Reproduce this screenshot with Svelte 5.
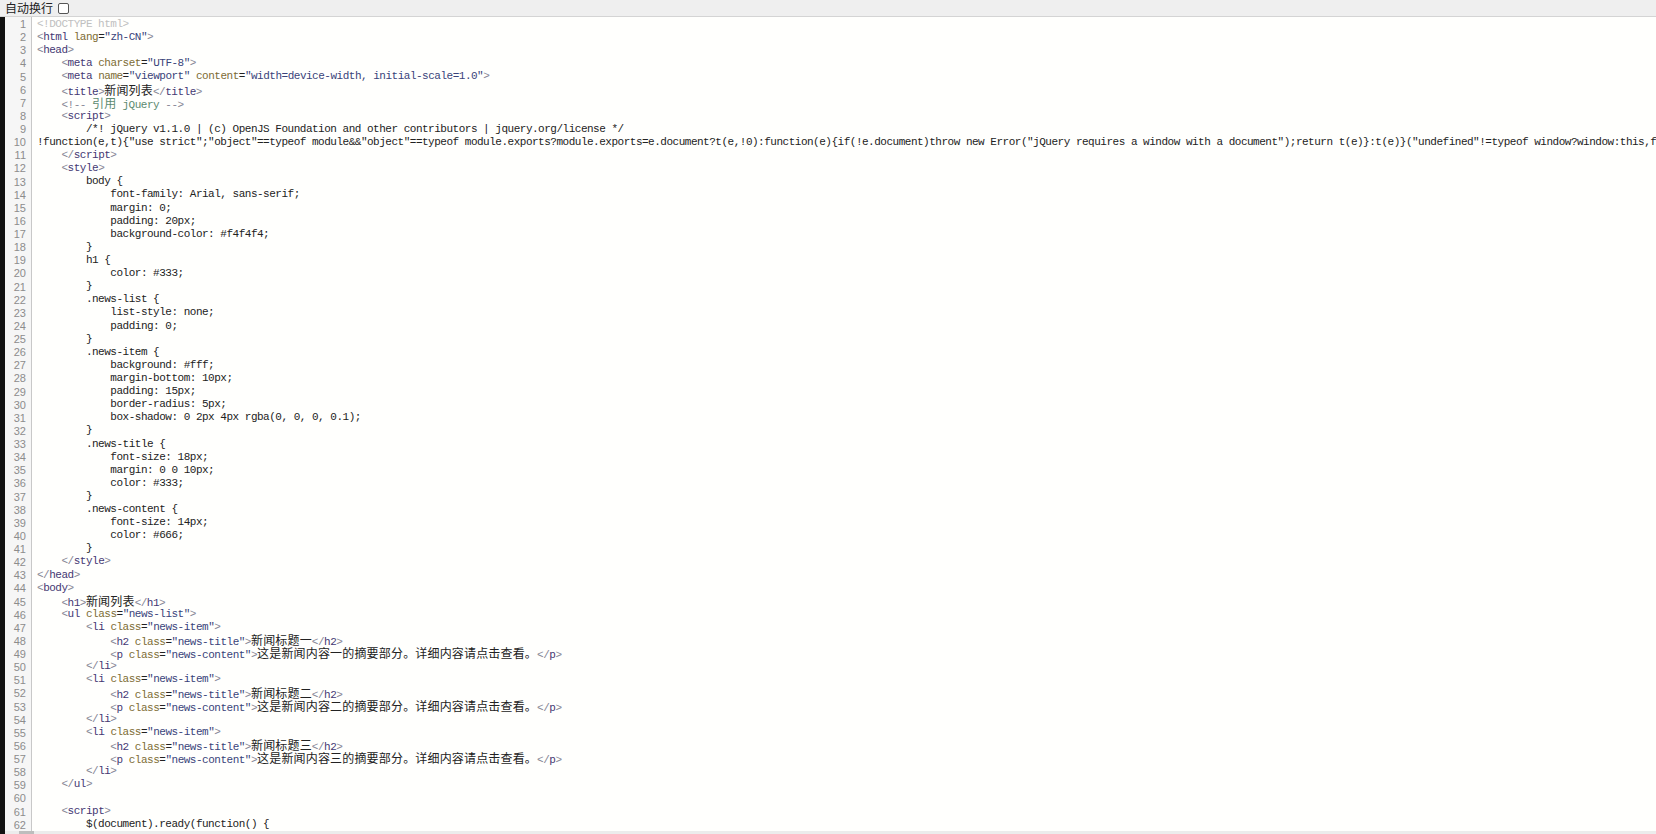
<script lang="ts">
  const source = `<!DOCTYPE html>
<html lang="zh-CN">
<head>
    <meta charset="UTF-8">
    <meta name="viewport" content="width=device-width, initial-scale=1.0">
    <title>新闻列表</title>
    <!-- 引用 jQuery -->
    <script>
        /*! jQuery v1.1.0 | (c) OpenJS Foundation and other contributors | jquery.org/license */
!function(e,t){"use strict";"object"==typeof module&&"object"==typeof module.exports?module.exports=e.document?t(e,!0):function(e){if(!e.document)throw new Error("jQuery requires a window with a document");return t(e)}:t(e)}("undefined"!=typeof window?window:this,function(C,e){
    </scr` + `ipt>
    <style>
        body {
            font-family: Arial, sans-serif;
            margin: 0;
            padding: 20px;
            background-color: #f4f4f4;
        }
        h1 {
            color: #333;
        }
        .news-list {
            list-style: none;
            padding: 0;
        }
        .news-item {
            background: #fff;
            margin-bottom: 10px;
            padding: 15px;
            border-radius: 5px;
            box-shadow: 0 2px 4px rgba(0, 0, 0, 0.1);
        }
        .news-title {
            font-size: 18px;
            margin: 0 0 10px;
            color: #333;
        }
        .news-content {
            font-size: 14px;
            color: #666;
        }
    </style>
</head>
<body>
    <h1>新闻列表</h1>
    <ul class="news-list">
        <li class="news-item">
            <h2 class="news-title">新闻标题一</h2>
            <p class="news-content">这是新闻内容一的摘要部分。详细内容请点击查看。</p>
        </li>
        <li class="news-item">
            <h2 class="news-title">新闻标题二</h2>
            <p class="news-content">这是新闻内容二的摘要部分。详细内容请点击查看。</p>
        </li>
        <li class="news-item">
            <h2 class="news-title">新闻标题三</h2>
            <p class="news-content">这是新闻内容三的摘要部分。详细内容请点击查看。</p>
        </li>
    </ul>

    <script>
        $(document).ready(function() {`;

  const HTML_TOKENS =
    /(<!DOCTYPE html>)|(<!--|-->)|(<\/?|\/?>)|((?<=<\/?)\w+)|([\w-]+(?==))|("[^"]*")|([\u4e00-\u9fff\u3002]+)/g;
  const CLASSES = ["doctype", "punct", "punct", "tag", "attr", "str", "cjk"];

  function highlight(line: string) {
    const isMarkup = /^\s*</.test(line);
    const isComment = line.includes("<!--");
    const out: Array<{ text: string; cls: string }> = [];
    let last = 0;
    const rest = isComment ? "comment" : "";
    for (const m of line.matchAll(HTML_TOKENS)) {
      const idx = CLASSES.findIndex((_, i) => m[i + 1] !== undefined);
      const cls = CLASSES[idx];
      if (!isMarkup && cls !== "cjk") continue;
      if (m.index > last) out.push({ text: line.slice(last, m.index), cls: rest });
      out.push({ text: m[0], cls: cls === "cjk" && isComment ? "cjk comment" : cls });
      last = m.index + m[0].length;
    }
    if (last < line.length) out.push({ text: line.slice(last), cls: rest });
    return out;
  }

  const lines = source.split("\n").map(highlight);
</script>

<div class="page">
  <div class="toolbar">
    <label class="wrap-toggle">自动换行 <input type="checkbox" /></label>
  </div>
  <div class="editor">
    <div class="gutter">
      {#each lines as _, i}
        <div class="num">{i + 1}</div>
      {/each}
    </div>
    <div class="code">
      {#each lines as parts}
        <div class="line">{#each parts as p}<span class={p.cls}>{p.text}</span>{/each}</div>
      {/each}
    </div>
  </div>
  <div class="scrollbar"><div class="thumb"></div></div>
</div>

<style>
  :global(body) {
    margin: 0;
    overflow: hidden;
  }

  .page {
    height: 834px;
    display: flex;
    flex-direction: column;
    background: #111;
  }

  .toolbar {
    height: 16px;
    flex-shrink: 0;
    background: #efefef;
    border-bottom: 1px solid #d4d4d4;
    padding-left: 5px;
    font-family: "Noto Sans CJK SC", "Liberation Sans", sans-serif;
    font-size: 12px;
    line-height: 16px;
    color: #222;
  }

  .wrap-toggle {
    display: flex;
    align-items: center;
    gap: 5px;
  }

  .wrap-toggle input {
    appearance: none;
    box-sizing: border-box;
    width: 11px;
    height: 11px;
    margin: 0;
    background: #fff;
    border: 1px solid #555;
    border-radius: 2px;
  }

  .editor {
    flex: 1;
    min-height: 0;
    margin-left: 5px;
    display: flex;
    overflow: hidden;
    background: #fffffd;
    font-family: "Liberation Mono", monospace;
    font-size: 11px;
    line-height: 13.12px;
  }

  .gutter {
    width: 27px;
    flex-shrink: 0;
    box-sizing: border-box;
    background: #f6f6f6;
    border-right: 1px solid #c8c8c8;
    padding-right: 5px;
    padding-top: 1px;
    text-align: right;
    color: #8c8c8c;
    font-family: "Liberation Sans", sans-serif;
  }

  .code {
    flex: 1;
    min-width: 0;
    padding-left: 5px;
    padding-top: 1px;
    color: #222;
    letter-spacing: -0.49px;
  }

  .line {
    height: 13.12px;
    white-space: pre;
  }

  .doctype {
    color: #c0c0c0;
  }

  .punct {
    color: #858594;
  }

  .tag {
    color: #443873;
  }

  .attr {
    color: #7d6c34;
  }

  .str {
    color: #39437a;
  }

  .comment {
    color: #5c8a70;
  }

  .cjk {
    font-family: "Noto Sans CJK SC", sans-serif;
    font-size: 12px;
    letter-spacing: 0.17px;
    line-height: 1;
  }

  .scrollbar {
    height: 3px;
    flex-shrink: 0;
    margin-left: 5px;
    background: #ececec;
  }

  .thumb {
    width: 15px;
    height: 100%;
    margin-left: 14px;
    background: #bdbdbd;
  }
</style>
